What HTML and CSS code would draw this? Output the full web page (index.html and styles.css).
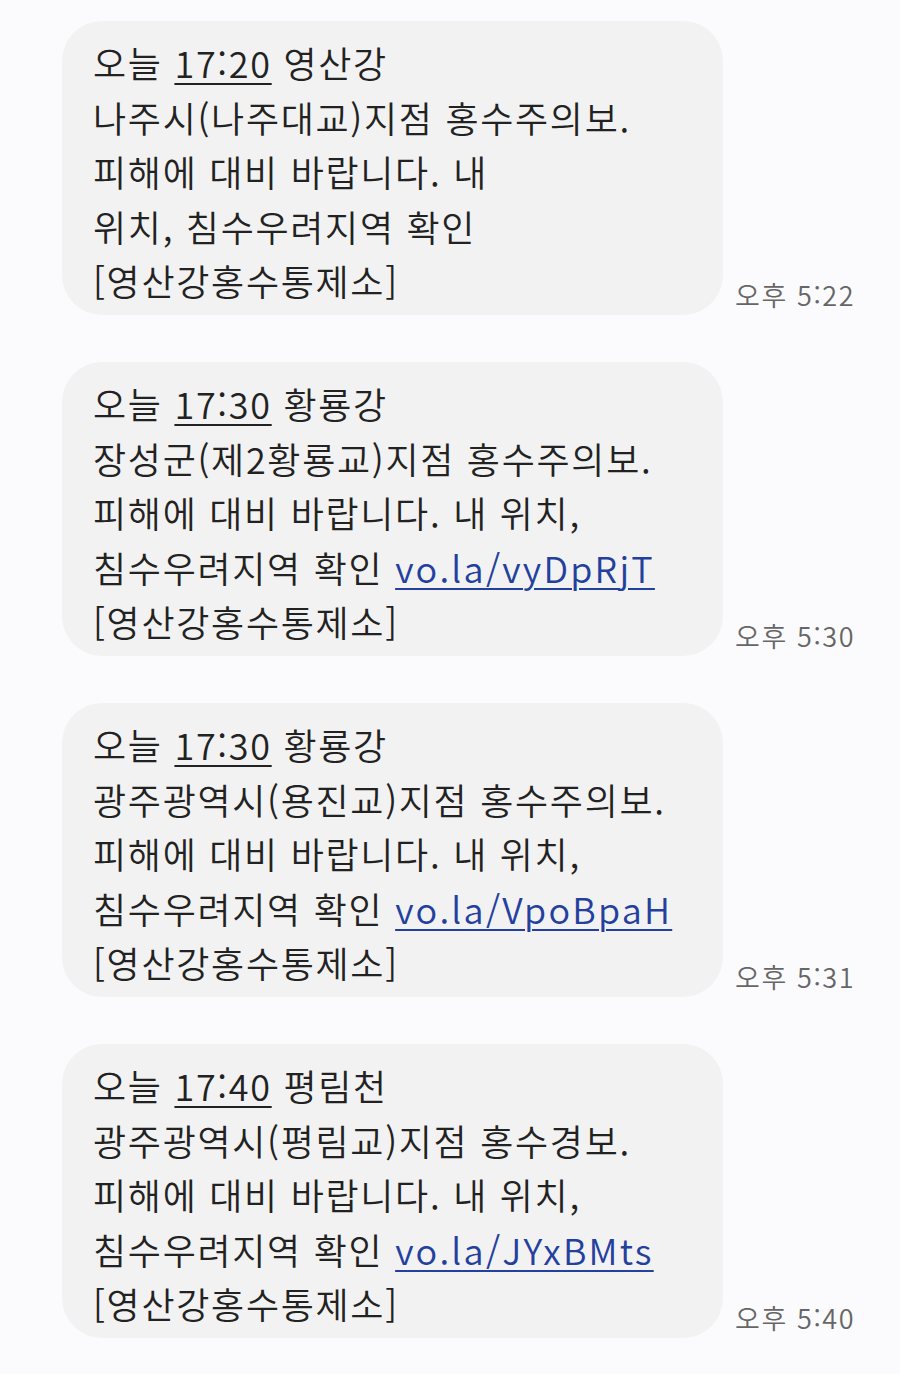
FILE: index.html
```html
<!DOCTYPE html>
<html lang="ko">
<head>
<meta charset="utf-8">
<link rel="stylesheet" href="styles.css">
</head>
<body>
<div class="list">
  <div class="row">
    <div class="bubble">오늘 <u>17:20</u> 영산강<br>나주시(나주대교)지점 홍수주의보.<br>피해에 대비 바랍니다. 내<br>위치, 침수우려지역 확인<br>[영산강홍수통제소]</div>
    <div class="time">오후 5:22</div>
  </div>
  <div class="row">
    <div class="bubble">오늘 <u>17:30</u> 황룡강<br>장성군(제2황룡교)지점 홍수주의보.<br>피해에 대비 바랍니다. 내 위치,<br>침수우려지역 확인 <a class="link">vo.la/vyDpRjT</a><br>[영산강홍수통제소]</div>
    <div class="time">오후 5:30</div>
  </div>
  <div class="row">
    <div class="bubble">오늘 <u>17:30</u> 황룡강<br>광주광역시(용진교)지점 홍수주의보.<br>피해에 대비 바랍니다. 내 위치,<br>침수우려지역 확인 <a class="link">vo.la/VpoBpaH</a><br>[영산강홍수통제소]</div>
    <div class="time">오후 5:31</div>
  </div>
  <div class="row">
    <div class="bubble">오늘 <u>17:40</u> 평림천<br>광주광역시(평림교)지점 홍수경보.<br>피해에 대비 바랍니다. 내 위치,<br>침수우려지역 확인 <a class="link">vo.la/JYxBMts</a><br>[영산강홍수통제소]</div>
    <div class="time">오후 5:40</div>
  </div>
</div>
</body>
</html>
```
FILE: styles.css
```css
html, body {
  margin: 0;
  padding: 0;
  background: #fbfbfd;
}
body {
  font-family: "Noto Sans CJK KR", "Noto Sans", sans-serif;
  color: #222;
}
.list {
  display: flex;
  flex-direction: column;
  gap: 47px;
  padding: 21px 0 0 62px;
}
.row {
  display: flex;
  align-items: flex-end;
  gap: 12px;
}
.bubble {
  box-sizing: border-box;
  width: 661px;
  height: 294px;
  background: #f2f2f2;
  border-radius: 40px;
  padding: 14px 20px 8px 31px;
  font-size: 36px;
  font-weight: 350;
  line-height: 54.5px;
  letter-spacing: 1.7px;
  white-space: nowrap;
}
.bubble u {
  text-decoration-thickness: 2px;
  text-underline-offset: 5px;
}
.link {
  color: #24409e;
  letter-spacing: 2.2px;
  text-decoration: underline;
  text-decoration-thickness: 2px;
  text-underline-offset: 5px;
}
.time {
  font-size: 27px;
  font-weight: 350;
  color: #666;
  line-height: 1;
  margin-bottom: 7px;
  letter-spacing: 1.6px;
}
```
